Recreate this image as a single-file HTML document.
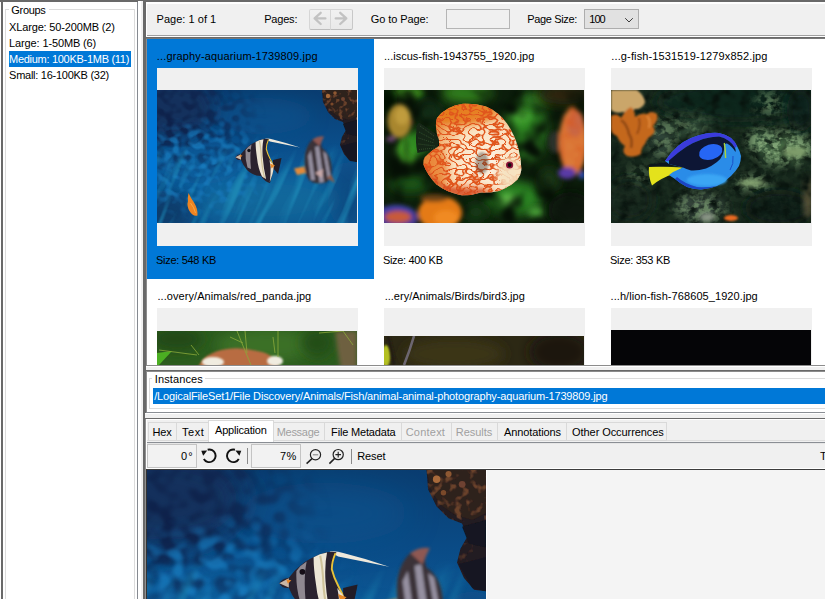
<!DOCTYPE html>
<html>
<head>
<meta charset="utf-8">
<title>File Discovery</title>
<style>
html,body{margin:0;padding:0;}
body{width:825px;height:599px;overflow:hidden;background:#f0f0f0;position:relative;
  font-family:"Liberation Sans","DejaVu Sans",sans-serif;font-size:11px;color:#000;}
.a{position:absolute;}
.t{position:absolute;white-space:nowrap;line-height:14px;height:14px;}
.w{color:#fff;}
.dis{color:#a0a0a0;}
.tab{top:422px;height:19px;box-sizing:border-box;border:1px solid #d9d9d9;background:#f0f0f0;}
.fld{top:444px;height:24px;box-sizing:border-box;border:1px solid #c4c4c4;background:#f2f2f2;}
</style>
</head>
<body>
<!-- DEFS -->
<svg width="0" height="0" style="position:absolute">
<defs>
  <filter id="b1" x="-30%" y="-30%" width="160%" height="160%"><feGaussianBlur stdDeviation="1"/></filter>
  <filter id="b2" x="-30%" y="-30%" width="160%" height="160%"><feGaussianBlur stdDeviation="2.2"/></filter>
  <filter id="b4" x="-40%" y="-40%" width="180%" height="180%"><feGaussianBlur stdDeviation="4.5"/></filter>
  <filter id="b8" x="-50%" y="-50%" width="200%" height="200%"><feGaussianBlur stdDeviation="9"/></filter>
  <filter id="b05" x="-20%" y="-20%" width="140%" height="140%"><feGaussianBlur stdDeviation="0.45"/></filter>
  <filter id="wlight" x="0" y="0" width="100%" height="100%" color-interpolation-filters="sRGB">
    <feTurbulence type="fractalNoise" baseFrequency="0.13 0.15" numOctaves="1" seed="4"/>
    <feColorMatrix type="matrix" values="0 0 0 0 0.09  0 0 0 0 0.47  0 0 0 0 0.73  4.6 0 0 0 -2.15"/><feGaussianBlur stdDeviation="0.7"/>
  </filter>
  <filter id="wdark" x="0" y="0" width="100%" height="100%" color-interpolation-filters="sRGB">
    <feTurbulence type="fractalNoise" baseFrequency="0.12 0.14" numOctaves="1" seed="11"/>
    <feColorMatrix type="matrix" values="0 0 0 0 0.055  0 0 0 0 0.13  0 0 0 0 0.29  0 4.6 0 0 -2.0"/><feGaussianBlur stdDeviation="0.7"/>
  </filter>
  <filter id="wstreak" x="0" y="0" width="100%" height="100%" color-interpolation-filters="sRGB">
    <feTurbulence type="fractalNoise" baseFrequency="0.11 0.012" numOctaves="2" seed="7"/>
    <feColorMatrix type="matrix" values="0 0 0 0 0.11  0 0 0 0 0.52  0 0 0 0 0.70  3.2 0 0 0 -1.6"/><feGaussianBlur stdDeviation="0.7"/>
  </filter>
  <filter id="ctex" x="0" y="0" width="100%" height="100%" color-interpolation-filters="sRGB">
    <feTurbulence type="fractalNoise" baseFrequency="0.22" numOctaves="2" seed="5"/>
    <feColorMatrix type="matrix" values="0 0 0 0 0.66  0 0 0 0 0.40  0 0 0 0 0.24  4.5 0 0 0 -2.35"/>
  </filter>
  <linearGradient id="aqbg" x1="0" y1="0" x2="0" y2="1">
    <stop offset="0" stop-color="#0a3d70"/><stop offset=".35" stop-color="#0a4b86"/>
    <stop offset=".7" stop-color="#0d5c9b"/><stop offset="1" stop-color="#0c5792"/>
  </linearGradient>
  <radialGradient id="mkA" gradientUnits="userSpaceOnUse" cx="45" cy="78" r="85" gradientTransform="translate(45 78) scale(1 .62) translate(-45 -78)">
    <stop offset="0" stop-color="#fff"/><stop offset=".6" stop-color="#bbb"/><stop offset="1" stop-color="#000"/>
  </radialGradient>
  <radialGradient id="mkB" gradientUnits="userSpaceOnUse" cx="15" cy="30" r="95" gradientTransform="translate(15 30) scale(1 .7) translate(-15 -30)">
    <stop offset="0" stop-color="#fff"/><stop offset=".55" stop-color="#999"/><stop offset="1" stop-color="#000"/>
  </radialGradient>
  <linearGradient id="mkC" x1="0" y1="0" x2="0" y2="1">
    <stop offset=".4" stop-color="#000"/><stop offset=".62" stop-color="#fff"/><stop offset="1" stop-color="#fff"/>
  </linearGradient>
  <mask id="mA" maskUnits="userSpaceOnUse" x="0" y="0" width="200" height="133"><rect width="200" height="133" fill="url(#mkA)"/></mask>
  <mask id="mB" maskUnits="userSpaceOnUse" x="0" y="0" width="200" height="133"><rect width="200" height="133" fill="url(#mkB)"/></mask>
  <mask id="mC" maskUnits="userSpaceOnUse" x="0" y="0" width="200" height="133"><rect width="200" height="133" fill="url(#mkC)"/></mask>
  <clipPath id="aqclip"><rect width="200" height="133"/></clipPath>
  <clipPath id="corclip"><path d="M165 0 L200 0 L200 72 L193 71 L187 64 L183 55 L185 47 L189 40 L186 32 L178 29 L171 22 L166 12 Z"/></clipPath>
  <g id="aq" clip-path="url(#aqclip)">
    <rect width="200" height="133" fill="url(#aqbg)"/>
    <ellipse cx="12" cy="18" rx="48" ry="30" fill="#132f58" opacity=".85" filter="url(#b8)"/>
    <ellipse cx="105" cy="26" rx="50" ry="18" fill="#0c5590" opacity=".55" filter="url(#b8)"/>
    <ellipse cx="6" cy="122" rx="32" ry="22" fill="#083660" opacity=".8" filter="url(#b8)"/>
    <ellipse cx="192" cy="105" rx="22" ry="34" fill="#0a447a" opacity=".7" filter="url(#b8)"/>
    <ellipse cx="110" cy="110" rx="70" ry="22" fill="#14749f" opacity=".5" filter="url(#b8)"/>
    <ellipse cx="45" cy="72" rx="40" ry="22" fill="#0f66a6" opacity=".4" filter="url(#b8)"/>
    <g mask="url(#mB)"><rect width="200" height="133" filter="url(#wdark)"/></g>
    <g mask="url(#mA)"><rect width="200" height="133" filter="url(#wlight)"/></g>
    <g mask="url(#mC)"><rect x="-60" y="-40" width="320" height="240" filter="url(#wstreak)" transform="rotate(24 100 66)"/></g>
    <!-- coral -->
    <g filter="url(#b05)">
      <path d="M165 0 L200 0 L200 72 L193 71 L187 64 L183 55 L185 47 L189 40 L186 32 L178 29 L171 22 L166 12 Z" fill="#221a20"/>
      <path d="M165 0 L200 0 L200 26 L192 30 L182 27 L173 21 L167 11 Z" fill="#2f201c"/>
      <g clip-path="url(#corclip)" opacity=".5"><rect x="160" y="0" width="40" height="31" filter="url(#ctex)"/><rect x="178" y="44" width="14" height="12" filter="url(#ctex)" opacity=".6"/></g>
      <circle cx="171" cy="6" r="2.200" fill="#a86a3a"/><circle cx="178" cy="3" r="1.800" fill="#8e5832"/>
      <circle cx="186" cy="9" r="2" fill="#6e4230"/><circle cx="175" cy="14" r="1.600" fill="#7a4a2c"/>
      <path d="M186 34 L200 30 L200 46 L190 44 Z" fill="#121520"/>
      <path d="M184 56 L200 52 L200 72 L192 70 Z" fill="#151722"/>
    </g>
    <!-- fish 2 -->
    <g filter="url(#b1)">
      <path d="M137 78.500 L147 76.500 L149 83 L140 85 Z" fill="#e08a3a"/>
      <path d="M148 64 Q150 54 156 49 L166 46.500 Q163 53 165 58 Q173 63 174.500 75 Q176 87 170 92 Q160 96 152 90 Q146 80 148 64 Z" fill="#3a3038"/>
      <path d="M151 66 L154 60 L158 90 L154 90 Z M158 57 L162 56 L167 92 L162.500 93 Z M166 61 L169.500 64 L173.500 86 L171 90 Z" fill="#9590a0"/>
      <path d="M155.500 49.500 Q161 45.500 167 46.500 L162.500 56 Z" fill="#8e5852"/>
      <path d="M158 83 L166 79 L165 88 Z" fill="#c8a8a8"/>
      <path d="M170 88 L178 93 L174 84 Z" fill="#8a5a48"/>
    </g>
    <!-- fish 1 -->
    <g filter="url(#b05)">
      <path d="M108 48.500 Q112 48 116 49.500 Q130 53 143 57.500 Q128 54.500 113 51.500 Z" fill="#efe9dc"/>
      <path d="M116 70 L124.500 68 Q123 76 121 84 L116 78 Z" fill="#211c28"/>
      <path d="M78.400 67.200 Q80 64.500 84 64 Q87.700 58.900 93 55 Q99 51 106 49 Q110 48.300 112 49 Q110 54 109.500 59 Q111 64 113.400 69 Q116 73 117 77 Q116 82 113 93 Q108 92 104 86 Q96 86 90 80 Q86 75 84 70 Q80 70.500 78.400 67.200 Z" fill="#2a222e"/>
      <path d="M98.600 52 Q102 50 106.500 49.200 Q105 56 105.600 66 Q106.500 78 109 89 L105 86.500 Q101 78 100 68 Q98.500 58 98.600 52 Z" fill="#ece6d6"/>
      <path d="M102.500 51 Q104 58 104.500 70 Q105.500 80 107.500 88" stroke="#cfc39a" stroke-width="1.200" fill="none"/>
      <path d="M88.500 60 Q91 56.500 94.500 54.500 Q92.500 64 94 79 L90.500 77.500 Q88 69 88.500 60 Z" fill="#8f8890"/>
      <path d="M111.500 49.500 Q109.300 54.500 109.300 59 Q110.500 64 113.200 69 Q115.500 73 116.500 77" stroke="#e6c23a" stroke-width="1.100" fill="none"/>
      <path d="M112.500 70 Q114 76 113.500 84 L112.800 92 L115.500 84 Q117 78 116.500 75 Z" fill="#e9e2d2"/>
      <circle cx="92" cy="60.500" r="1.700" fill="#121018"/>
      <path d="M78.400 67.200 L84 64.300 L84 69.800 Z" fill="#c9b6a6"/>
      <path d="M82.500 65 L85.500 65.500 L83.500 67.500 Z" fill="#e8862a"/>
      <path d="M113 73.500 L118 75.500 L114.500 78.500 Z" fill="#e88a2a"/>
    </g>
    <!-- small orange fish -->
    <g filter="url(#b05)">
      <path d="M31.500 103 Q30.500 108 31 111 Q29.500 116 32.500 121 Q36 127 40.500 125.500 Q41 119 37 112.500 Q34 108.500 31.500 103 Z" fill="#ee8420"/>
      <path d="M33.500 113 Q37 117 38.500 123" stroke="#f8b050" stroke-width=".8" fill="none"/>
    </g>
  </g>
</defs>
</svg>
<svg width="0" height="0" style="position:absolute">
<defs>
  <filter id="c3" x="-40%" y="-40%" width="180%" height="180%"><feGaussianBlur stdDeviation="3"/></filter>
  <filter id="c6" x="-50%" y="-50%" width="200%" height="200%"><feGaussianBlur stdDeviation="6"/></filter>
  <radialGradient id="dbody" gradientUnits="userSpaceOnUse" cx="104" cy="72" r="62">
    <stop offset="0" stop-color="#fdf3e4"/><stop offset=".55" stop-color="#fae2c2"/>
    <stop offset=".85" stop-color="#f2b070"/><stop offset="1" stop-color="#e6863c"/>
  </radialGradient>
  <filter id="dnet" x="0" y="0" width="100%" height="100%" color-interpolation-filters="sRGB">
    <feTurbulence type="turbulence" baseFrequency="0.15 0.2" numOctaves="1" seed="8"/>
    <feColorMatrix type="matrix" values="0 0 0 0 0.88  0 0 0 0 0.34  0 0 0 0 0.12  -8 0 0 0 1.38"/>
    <feGaussianBlur stdDeviation="0.3"/>
  </filter>
  <filter id="dnet2" x="0" y="0" width="100%" height="100%" color-interpolation-filters="sRGB">
    <feTurbulence type="turbulence" baseFrequency="0.1 0.13" numOctaves="1" seed="21"/>
    <feColorMatrix type="matrix" values="0 0 0 0 0.84  0 0 0 0 0.36  0 0 0 0 0.14  0 -9 0 0 1.4"/>
    <feGaussianBlur stdDeviation="1.1"/>
  </filter>
  <filter id="gtex" x="0" y="0" width="100%" height="100%" color-interpolation-filters="sRGB">
    <feTurbulence type="fractalNoise" baseFrequency="0.05 0.045" numOctaves="2" seed="2"/>
    <feColorMatrix type="matrix" values="0 0 0 0 0.02  0 0 0 0 0.06  0 0 0 0 0.02  0 3.2 0 0 -1.35"/>
    <feGaussianBlur stdDeviation="2"/>
  </filter>
  <clipPath id="dclip"><path d="M55 50 Q50 38 53 28 Q62 16 79 13.800 Q92 13 102 16.400 Q115 22 123 33.400 Q131 45 134.700 59.400 Q137.500 70 137.300 80.300 Q136.500 86 133.400 89.400 Q126 97 115 101 Q106 103 97 102.400 Q86 106 76 105 Q62 102 52.600 94.600 Q44 86 39.600 75 Q39 70 41 67 Q48 60 55 56 Z"/></clipPath>
  <clipPath id="dclipR"><ellipse cx="189" cy="52" rx="14" ry="36"/></clipPath>
  <clipPath id="pclip"><rect width="200" height="133"/></clipPath>
  <g id="discus" clip-path="url(#pclip)">
    <rect width="200" height="133" fill="#0d1f0c"/>
    <ellipse cx="24" cy="3" rx="16" ry="7" fill="#3a8a1c" filter="url(#c3)"/>
    <ellipse cx="82" cy="3" rx="26" ry="10" fill="#33821e" filter="url(#c6)"/>
    <ellipse cx="45" cy="22" rx="12" ry="12" fill="#143a1c" filter="url(#c6)"/>
    <ellipse cx="24" cy="60" rx="11" ry="15" fill="#46a628" filter="url(#c3)"/>
    <ellipse cx="34" cy="52" rx="10" ry="14" fill="#2f8a22" filter="url(#c6)"/>
    <ellipse cx="142" cy="40" rx="20" ry="30" fill="#2d8624" filter="url(#c6)"/>
    <ellipse cx="137" cy="26" rx="10" ry="7" fill="#48aa36" filter="url(#c3)"/>
    <ellipse cx="148" cy="58" rx="7" ry="10" fill="#41a032" filter="url(#c3)"/>
    <ellipse cx="150" cy="10" rx="14" ry="7" fill="#2f7a22" filter="url(#c6)"/>
    <ellipse cx="130" cy="108" rx="28" ry="17" fill="#2c8422" filter="url(#c6)"/>
    <ellipse cx="124" cy="110" rx="9" ry="7" fill="#5cb444" filter="url(#c3)"/>
    <ellipse cx="152" cy="122" rx="8" ry="5" fill="#4aa238" filter="url(#c3)"/>
    <ellipse cx="26" cy="94" rx="20" ry="9" fill="#1f5818" filter="url(#c6)"/>
    <ellipse cx="92" cy="122" rx="12" ry="9" fill="#153c12" filter="url(#c6)"/>
    <ellipse cx="180" cy="5" rx="26" ry="9" fill="#30260f" filter="url(#c6)"/>
    <ellipse cx="4" cy="12" rx="10" ry="14" fill="#050a05" filter="url(#c6)"/>
    <ellipse cx="186" cy="120" rx="22" ry="18" fill="#0a150a" filter="url(#c6)"/>
    <ellipse cx="165" cy="90" rx="10" ry="12" fill="#1a3a16" filter="url(#c6)"/>
    <rect width="200" height="133" filter="url(#gtex)"/>
    <!-- background fishes -->
    <g filter="url(#b2)">
      <ellipse cx="15.500" cy="31" rx="12" ry="17" fill="#a8862e"/>
      <ellipse cx="18" cy="26" rx="7" ry="9" fill="#c09c3c"/>
      <ellipse cx="7" cy="49" rx="5" ry="3" fill="#6a4470"/>
      <circle cx="27.500" cy="32" r="1.500" fill="#a03040"/>
    </g>
    <g filter="url(#b2)">
      <ellipse cx="171" cy="52" rx="7" ry="11" fill="#2a302a"/>
      <ellipse cx="189" cy="52" rx="14" ry="33" fill="#dc7c3a"/>
      <ellipse cx="191" cy="34" rx="8" ry="13" fill="#c86848"/>
      <g clip-path="url(#dclipR)"><rect x="170" y="15" width="30" height="80" filter="url(#dnet2)" opacity=".8"/></g>
      <ellipse cx="183" cy="83" rx="9" ry="6" fill="#5a3aa6"/>
      <ellipse cx="198" cy="85" rx="3" ry="4" fill="#2a50c4"/>
    </g>
    <g filter="url(#b2)">
      <ellipse cx="56" cy="123" rx="22" ry="17" fill="#e47a18"/>
      <ellipse cx="50" cy="108" rx="14" ry="4" fill="#6a4216"/>
      <ellipse cx="62" cy="128" rx="12" ry="8" fill="#f08a20"/>
      <ellipse cx="12" cy="128" rx="22" ry="13" fill="#4a3a94"/>
      <ellipse cx="14" cy="127" rx="13" ry="6" fill="#c85a3a"/>
      <path d="M0 120 Q14 112 30 122" stroke="#3a48c0" stroke-width="2" fill="none"/>
    </g>
    <!-- main fish -->
    <g filter="url(#b05)">
      <path d="M56 47 L36 33 Q32 33 32.500 40 Q31 52 33.500 63 L53 59 Z" fill="#172718"/>
      <path d="M36 36 L50 46 M35 42 L50 50 M34.500 48 L50 53 M34.500 54 L51 56 M35 59.500 L52 58" stroke="#3c5a34" stroke-width=".7" fill="none" stroke-dasharray="1 1"/>
      <path d="M55 50 Q50 38 53 28 Q62 16 79 13.800 Q92 13 102 16.400 Q115 22 123 33.400 Q131 45 134.700 59.400 Q137.500 70 137.300 80.300 Q136.500 86 133.400 89.400 Q126 97 115 101 Q106 103 97 102.400 Q86 106 76 105 Q62 102 52.600 94.600 Q44 86 39.600 75 Q39 70 41 67 Q48 60 55 56 Z" fill="url(#dbody)"/>
      <g clip-path="url(#dclip)">
        <ellipse cx="76" cy="22" rx="36" ry="13" fill="#e67c1a" opacity=".9" filter="url(#c3)"/>
        <ellipse cx="50" cy="80" rx="13" ry="24" fill="#e88030" opacity=".75" filter="url(#c3)"/>
        <ellipse cx="80" cy="103" rx="30" ry="7" fill="#de5a28" opacity=".7" filter="url(#c3)"/>
        <rect x="30" y="5" width="115" height="110" filter="url(#dnet)"/>
        <ellipse cx="126" cy="84" rx="13" ry="18" fill="#f6e2c0" opacity=".9" filter="url(#c3)"/>
        <ellipse cx="98" cy="73" rx="6.500" ry="11" fill="#4a4038" opacity=".45" filter="url(#b1)"/>
        <path d="M40 80 Q54 100 76 105 Q88 106 100 102 L100 99 Q80 102 62 96 Q48 88 42 76 Z" fill="#cf4a26" opacity=".55" filter="url(#b1)"/>
      </g>
      <circle cx="125.600" cy="75" r="3.600" fill="#8a1238"/><circle cx="125.600" cy="75" r="1.900" fill="#120810"/>
    </g>
  </g>

  <filter id="moss" x="0" y="0" width="100%" height="100%" color-interpolation-filters="sRGB">
    <feTurbulence type="fractalNoise" baseFrequency="0.13 0.16" numOctaves="3" seed="14"/>
    <feColorMatrix type="matrix" values="0 0 0 0 0.50  0 0 0 0 0.64  0 0 0 0 0.46  4.4 0 0 0 -1.8"/>
    <feGaussianBlur stdDeviation="0.5"/>
  </filter>
  <filter id="mossd" x="0" y="0" width="100%" height="100%" color-interpolation-filters="sRGB">
    <feTurbulence type="fractalNoise" baseFrequency="0.1 0.12" numOctaves="2" seed="33"/>
    <feColorMatrix type="matrix" values="0 0 0 0 0.03  0 0 0 0 0.07  0 0 0 0 0.05  0 3.6 0 0 -1.7"/>
    <feGaussianBlur stdDeviation="0.8"/>
  </filter>
  <mask id="mMoss" maskUnits="userSpaceOnUse" x="0" y="0" width="200" height="133">
    <rect width="200" height="133" fill="#0d0d0d"/>
    <g filter="url(#c6)" fill="#fff">
      <ellipse cx="140" cy="8" rx="70" ry="14" fill="#000"/>
      <ellipse cx="172" cy="58" rx="30" ry="16"/>
      <ellipse cx="150" cy="50" rx="14" ry="10"/>
      <ellipse cx="142" cy="93" rx="18" ry="6"/>
      <ellipse cx="90" cy="118" rx="26" ry="14" fill="#aaa"/>
      <ellipse cx="52" cy="48" rx="12" ry="20" fill="#999"/>
      <ellipse cx="158" cy="16" rx="8" ry="10" fill="#bbb"/>
      <ellipse cx="75" cy="36" rx="22" ry="7" fill="#888"/>
      <ellipse cx="30" cy="84" rx="14" ry="8" fill="#777"/>
    </g>
  </mask>
  <g id="tang" clip-path="url(#pclip)">
    <rect width="200" height="133" fill="#15261b"/>
    <ellipse cx="125" cy="12" rx="80" ry="20" fill="#10261f" filter="url(#c6)"/>
    <ellipse cx="174" cy="60" rx="24" ry="12" fill="#4e7048" filter="url(#c6)"/>
    <ellipse cx="150" cy="52" rx="12" ry="9" fill="#3a5c40" filter="url(#c6)"/>
    <ellipse cx="80" cy="38" rx="24" ry="8" fill="#34503a" filter="url(#c6)"/>
    <ellipse cx="50" cy="50" rx="10" ry="18" fill="#33463a" filter="url(#c6)"/>
    <ellipse cx="90" cy="116" rx="24" ry="14" fill="#34443a" filter="url(#c6)"/>
    <ellipse cx="168" cy="118" rx="34" ry="18" fill="#0e1c14" filter="url(#c6)"/>
    <ellipse cx="190" cy="20" rx="14" ry="22" fill="#10201a" filter="url(#c6)"/>
    <ellipse cx="18" cy="110" rx="24" ry="22" fill="#15261a" filter="url(#c6)"/>
    <ellipse cx="197" cy="108" rx="4" ry="22" fill="#5e563a" filter="url(#c3)"/>
    <rect width="200" height="133" filter="url(#mossd)"/>
    <g mask="url(#mMoss)"><rect width="200" height="133" filter="url(#moss)"/></g>
    <ellipse cx="141" cy="93" rx="13" ry="3.500" fill="#86a472" filter="url(#b2)"/>
    <ellipse cx="184" cy="62" rx="12" ry="5" fill="#7e9c6a" filter="url(#b2)"/>
    <ellipse cx="96" cy="127" rx="8" ry="4" fill="#8e9a8a" filter="url(#b2)"/>
    <!-- corals -->
    <g filter="url(#b1)">
      <path d="M0 0 L26 0 Q34 6 34 13 Q30 20 24 19 Q20 24 12 22 Q4 24 0 20 Z" fill="#caa66a"/>
      <path d="M0 26 Q6 22 10 28 Q14 20 20 17 Q24 20 24 27 Q30 22 36 24 Q40 20 46 24 Q48 30 42 36 Q46 42 40 46 Q36 48 34 54 Q30 58 30 64 Q24 68 16 66 Q10 62 14 56 Q8 52 6 46 Q0 44 0 38 Z" fill="#c4681f"/>
      <path d="M10 30 Q16 34 18 44 Q22 50 20 58" stroke="#8e4614" stroke-width="2.500" fill="none"/>
      <path d="M28 28 Q30 36 26 44" stroke="#944a16" stroke-width="2" fill="none"/>
      <path d="M36 26 Q40 30 38 38" stroke="#e08838" stroke-width="2" fill="none"/>
    </g>
    <ellipse cx="120" cy="128" rx="7" ry="3" fill="#e86a22" filter="url(#b1)"/>
    <!-- fish -->
    <g filter="url(#b05)">
      <path d="M38 76 L72 77.500 Q66 81 62 84 Q50 88 41 95.500 Q37 86 38 76 Z" fill="#e4e21c"/>
      <path d="M38 74.500 L58 72 L62 76 L38 77 Z" fill="#10141a"/>
      <path d="M54 71 Q60 62 67 56 Q73 51 80 48 Q88 44.500 95 43.500 Q102 42.500 108 43 Q115 44.500 120 48 Q124 51.500 126 56 Q129 61 130 66 Q130 71 128 76 Q125 81 120 86 Q114 92 106 96 Q98 99 90 99.500 Q82 99 76 97 Q69 93.500 64 89 Q60 86.500 58 85 L62 82 L72 77.500 L58 74 Z" fill="#2b8ce8"/>
      <ellipse cx="96" cy="90" rx="20" ry="6" fill="#3ba6f4" filter="url(#b1)"/>
      <path d="M64 89 Q69 93.500 76 97 Q82 99 90 99.500 Q98 99 106 96 Q96 98 86 97 Q74 94 66 87 Z" fill="#1c44c4"/>
      <path d="M54 71 Q60 62 67 56 Q73 51 80 48 Q88 44.500 95 43.500 Q102 42.500 108 43 Q115 44.500 120 48 Q124 51.500 126 56 L124 58 Q121 53 118 51 Q113 47 108 46.500 Q100 46.500 92 49 Q83 52 75 57 Q66 63 58 71 Z" fill="#3a3adc"/>
      <path d="M58 70.500 Q66 63 75 57 Q83 52 92 49 Q100 46.500 108 46.500 Q113 47 118 51 Q121 53 124 58 Q125 60 124.500 62 Q121 56 116 53.500 Q114 53 113.500 55 Q113.500 59 112 64 Q110 69 106 72 Q101 76 95 78.500 Q87 81 80 80.500 Q75 79 72 77.500 L58 74 Z" fill="#0e1534"/>
      <ellipse cx="99.700" cy="62" rx="12" ry="7.600" transform="rotate(-17 99.700 62)" fill="#2766f4"/>
      <path d="M113.300 53 Q114.600 60 114.600 68" stroke="#a8d23c" stroke-width="1.400" fill="none"/>
      <path d="M122 66 Q123 74 119 80" stroke="#1a50c8" stroke-width="1" fill="none"/>
    </g>
  </g>

  <g id="panda">
    <rect width="200" height="133" fill="#2c5c1e"/>
    <ellipse cx="110" cy="14" rx="50" ry="16" fill="#3a7028" filter="url(#c6)"/>
    <ellipse cx="20" cy="8" rx="26" ry="12" fill="#214a16" filter="url(#c6)"/>
    <ellipse cx="160" cy="12" rx="16" ry="14" fill="#244e18" filter="url(#c6)"/>
    <path d="M178 0 L200 0 L200 40 L184 40 Q180 20 178 0 Z" fill="#6e6040" filter="url(#b2)"/>
    <path d="M40 40 Q44 22 70 18 Q84 16 100 20 Q118 22 124 40 Z" fill="#b86c42" filter="url(#b1)"/>
    <ellipse cx="56" cy="31" rx="11" ry="5" fill="#f0ece0" filter="url(#b1)"/>
    <ellipse cx="118" cy="30" rx="8" ry="5" fill="#f0ece0" filter="url(#b1)"/>
    <path d="M0 22 L15 20 L2 34 L0 34 Z" fill="#4cae22" filter="url(#b05)"/>
    <g stroke="#8aa83a" stroke-width=".8" fill="none" filter="url(#b05)">
      <path d="M80 0 Q88 20 94 34"/><path d="M88 0 L90 22"/><path d="M121 0 L121 26"/><path d="M116 6 L118 22"/>
      <path d="M2 19 L40 24"/><path d="M73 6 L86 12"/><path d="M162 2 L186 0 L196 14"/><path d="M34 14 L42 24"/>
    </g>
  </g>

  <g id="bird3">
    <rect width="200" height="133" fill="#2c2814"/>
    <ellipse cx="70" cy="18" rx="50" ry="16" fill="#3a3418" filter="url(#c6)"/>
    <ellipse cx="175" cy="16" rx="30" ry="20" fill="#1c1810" filter="url(#c6)"/>
    <ellipse cx="2" cy="20" rx="4.500" ry="11" fill="#b4c024" filter="url(#b1)"/>
    <path d="M30 0 Q26 14 20 29" stroke="#6c6670" stroke-width="2.600" fill="none" filter="url(#b05)"/>
    <path d="M4 0 Q8 14 10 29" stroke="#201c14" stroke-width="3" fill="none" filter="url(#b1)"/>
  </g>
</defs>
</svg>
<!-- /DEFS -->

<!-- ===== window edges ===== -->
<div class="a" style="left:0;top:0;width:825px;height:2px;background:#696969;"></div>
<div class="a" style="left:0;top:2px;width:825px;height:2px;background:#fff;"></div>
<div class="a" style="left:0;top:2px;width:1px;height:597px;background:#fff;"></div>
<div class="a" style="left:1px;top:0;width:2px;height:599px;background:#696969;"></div>

<!-- ===== left groups panel ===== -->
<div class="a" style="left:3px;top:2px;width:134px;height:597px;background:#fff;"></div>
<div class="a" style="left:137px;top:2px;width:1px;height:597px;background:#868a91;"></div>
<div class="a" style="left:138px;top:1px;width:5px;height:598px;background:linear-gradient(90deg,#fff 0,#fff 50%,#f0f0f0 60%,#f0f0f0 100%);"></div>
<div class="a" style="left:5px;top:9px;width:130px;height:600px;border:1px solid #dcdcdc;box-sizing:border-box;"></div>
<div class="a" style="left:9px;top:4px;width:40px;height:12px;background:#fff;"></div>
<div class="t" style="left:11.3px;top:3px;letter-spacing:-0.3px;">Groups</div>
<div class="t" style="left:9.1px;top:20px;letter-spacing:-0.163px;">XLarge: 50-200MB (2)</div>
<div class="t" style="left:9.1px;top:36px;letter-spacing:-0.131px;">Large: 1-50MB (6)</div>
<div class="a" style="left:9px;top:51px;width:122px;height:16px;background:#0078d7;"></div>
<div class="t w" style="left:9px;top:52px;letter-spacing:-0.286px;">Medium: 100KB-1MB (11)</div>
<div class="t" style="left:9.1px;top:68px;letter-spacing:-0.268px;">Small: 16-100KB (32)</div>

<!-- ===== vertical splitter ===== -->
<div class="a" style="left:143px;top:0;width:3px;height:599px;background:#696969;"></div>
<div class="a" style="left:146px;top:37px;width:1px;height:375px;background:#8c8c8c;"></div>
<div class="a" style="left:145px;top:419px;width:1px;height:180px;background:#909090;"></div>

<!-- ===== top toolbar ===== -->
<div class="a" style="left:147px;top:4px;width:678px;height:31px;background:#f0f0f0;"></div>
<div class="a" style="left:146px;top:2px;width:1px;height:35px;background:#fff;"></div>
<div class="t" style="left:156.6px;top:12px;letter-spacing:0.021px;">Page: 1 of 1</div>
<div class="t" style="left:264.2px;top:12px;letter-spacing:-0.2px;">Pages:</div>
<div class="a" style="left:309px;top:9px;width:22px;height:21px;box-sizing:border-box;border:1px solid #d6d6d6;border-bottom-color:#bdbdbd;border-radius:2px 0 0 2px;background:linear-gradient(#f1f1f1,#e9e9e9);"></div>
<div class="a" style="left:330px;top:9px;width:23px;height:21px;box-sizing:border-box;border:1px solid #d6d6d6;border-bottom-color:#bdbdbd;border-right-color:#c8c8c8;border-radius:0 2px 2px 0;background:linear-gradient(#f1f1f1,#e9e9e9);"></div>
<svg class="a" style="left:309px;top:8px;" width="44" height="22" viewBox="0 0 44 22">
  <g fill="none" stroke="#c2c2c2" stroke-width="2.3" stroke-linecap="round" stroke-linejoin="round">
    <path d="M5.600 10.400 H16.400 M11.700 4.800 L5.600 10.400 L11.700 16"/>
    <path d="M26.700 10.400 H37.300 M31.200 4.800 L37.300 10.400 L31.200 16"/>
  </g>
</svg>
<div class="t" style="left:370.8px;top:12px;letter-spacing:-0.1px;">Go to Page:</div>
<div class="a" style="left:446px;top:9px;width:64px;height:20px;box-sizing:border-box;border:1px solid #b5b5b5;background:#f0f0f0;"></div>
<div class="t" style="left:527.3px;top:12px;letter-spacing:-0.36px;">Page Size:</div>
<div class="a" style="left:584px;top:9px;width:55px;height:20px;box-sizing:border-box;border:1px solid #adadad;background:#e1e1e1;"></div>
<div class="t" style="left:589.3px;top:12px;letter-spacing:-1.0px;">100</div>
<svg class="a" style="left:622px;top:14px;" width="14" height="12" viewBox="622 14 14 12"><path d="M625.200 18.200 L629 22 L632.800 18.200" fill="none" stroke="#3c3c3c" stroke-width="1"/></svg>

<!-- toolbar / thumbs divider -->
<div class="a" style="left:147px;top:35px;width:678px;height:1px;background:#a0a0a0;"></div>
<div class="a" style="left:146px;top:36px;width:679px;height:1px;background:#fff;"></div>
<div class="a" style="left:146px;top:37px;width:679px;height:1px;background:#696969;"></div>
<div class="a" style="left:146px;top:38px;width:679px;height:1px;background:#787878;"></div>

<!-- ===== thumbnails area ===== -->
<div id="thumbs" class="a" style="left:147px;top:39px;width:678px;height:326px;background:#fff;overflow:hidden;">
  <!-- cell 1 (selected) -->
  <div class="a" style="left:0px;top:0px;width:227px;height:240px;background:#0078d7;"></div>
  <div class="t" style="left:9.8px;top:10px;letter-spacing:0.144px;">...graphy-aquarium-1739809.jpg</div>
  <div class="a" style="left:10px;top:29px;width:201px;height:178px;background:#f0f0f0;"></div>
  <div class="t" style="left:9px;top:214px;letter-spacing:-0.3px;">Size: 548 KB</div>
  <!-- cell 2 -->
  <div class="t" style="left:237.0px;top:10px;letter-spacing:0.016px;">...iscus-fish-1943755_1920.jpg</div>
  <div class="a" style="left:237px;top:29px;width:201px;height:178px;background:#f0f0f0;"></div>
  <div class="t" style="left:236px;top:214px;letter-spacing:-0.33px;">Size: 400 KB</div>
  <!-- cell 3 -->
  <div class="t" style="left:464.3px;top:10px;letter-spacing:0.131px;">...g-fish-1531519-1279x852.jpg</div>
  <div class="a" style="left:464px;top:29px;width:201px;height:178px;background:#f0f0f0;"></div>
  <div class="t" style="left:463px;top:214px;letter-spacing:-0.3px;">Size: 353 KB</div>
  <!-- row 2 -->
  <div class="t" style="left:10.4px;top:250px;letter-spacing:0.076px;">...overy/Animals/red_panda.jpg</div>
  <div class="a" style="left:10px;top:269px;width:201px;height:178px;background:#f0f0f0;"></div>
  <div class="t" style="left:237.7px;top:250px;letter-spacing:0.003px;">...ery/Animals/Birds/bird3.jpg</div>
  <div class="a" style="left:237px;top:269px;width:201px;height:178px;background:#f0f0f0;"></div>
  <div class="t" style="left:463.5px;top:250px;letter-spacing:0.079px;">...h/lion-fish-768605_1920.jpg</div>
  <div class="a" style="left:464px;top:269px;width:201px;height:178px;background:#f0f0f0;"></div>
  <!-- PHOTOS -->
  <svg class="a" style="left:10px;top:51px;" width="200" height="133" viewBox="0 0 200 133"><use href="#aq"/></svg>
  <svg class="a" style="left:237px;top:51px;" width="200" height="133" viewBox="0 0 200 133"><use href="#discus"/></svg>
  <svg class="a" style="left:464px;top:51px;" width="200" height="133" viewBox="0 0 200 133"><use href="#tang"/></svg>
  <svg class="a" style="left:10px;top:292px;" width="200" height="133" viewBox="0 0 200 133"><use href="#panda"/></svg>
  <svg class="a" style="left:237px;top:297px;" width="200" height="124" viewBox="0 0 200 124"><use href="#bird3"/></svg>
  <div class="a" style="left:464px;top:291px;width:200px;height:135px;background:#050507;"></div>
  <!-- /PHOTOS -->
</div>

<!-- ===== splitter between thumbs and instances ===== -->
<div class="a" style="left:147px;top:365px;width:678px;height:1px;background:#8c8c8c;"></div>
<div class="a" style="left:146px;top:366px;width:679px;height:1px;background:#fff;"></div>
<div class="a" style="left:146px;top:367px;width:679px;height:3px;background:#f0f0f0;"></div>
<div class="a" style="left:146px;top:370px;width:679px;height:1px;background:#696969;"></div>
<div class="a" style="left:146px;top:371px;width:679px;height:1px;background:#8c8c8c;"></div>

<!-- ===== instances panel ===== -->
<div class="a" style="left:147px;top:372px;width:678px;height:40px;background:#fff;"></div>
<div class="a" style="left:149px;top:378px;width:690px;height:31px;border:1px solid #dcdcdc;box-sizing:border-box;"></div>
<div class="a" style="left:152px;top:373px;width:53px;height:12px;background:#fff;"></div>
<div class="t" style="left:154.8px;top:372px;letter-spacing:0.118px;">Instances</div>
<div class="a" style="left:153px;top:388px;width:672px;height:16px;background:#0078d7;"></div>
<div class="t w" style="left:154.2px;top:389px;letter-spacing:-0.146px;">/LogicalFileSet1/File Discovery/Animals/Fish/animal-animal-photography-aquarium-1739809.jpg</div>

<!-- ===== splitter between instances and content viewer ===== -->
<div class="a" style="left:146px;top:412px;width:679px;height:1px;background:#8a8e94;"></div>
<div class="a" style="left:145px;top:413px;width:680px;height:1px;background:#fff;"></div>
<div class="a" style="left:145px;top:414px;width:680px;height:4px;background:#f0f0f0;"></div>
<div class="a" style="left:145px;top:418px;width:680px;height:1px;background:#696969;"></div>
<div class="a" style="left:146px;top:419px;width:679px;height:1px;background:#fff;"></div>
<div class="a" style="left:146px;top:420px;width:1px;height:49px;background:#fff;"></div>

<!-- ===== tabs ===== -->
<div id="tabs">
<div class="a" style="left:147px;top:440px;width:678px;height:1px;background:#dedede;"></div>
<div class="a" style="left:147px;top:442px;width:678px;height:1px;background:#8a8e94;"></div>
<div class="a" style="left:147px;top:443px;width:678px;height:1px;background:#e6e6e6;"></div>
<div class="a tab" style="left:148px;width:29px;"></div><div class="t" style="left:152.4px;top:425px;letter-spacing:-0.1px;">Hex</div>
<div class="a tab" style="left:176px;width:33px;"></div><div class="t" style="left:182px;top:425px;letter-spacing:0.55px;">Text</div>
<div class="a tab" style="left:273px;width:52px;"></div><div class="t dis" style="left:276.7px;top:425px;letter-spacing:-0.283px;">Message</div>
<div class="a tab" style="left:324px;width:78px;"></div><div class="t" style="left:331.1px;top:425px;letter-spacing:-0.175px;">File Metadata</div>
<div class="a tab" style="left:401px;width:51px;"></div><div class="t dis" style="left:405.7px;top:425px;letter-spacing:0.217px;">Context</div>
<div class="a tab" style="left:451px;width:47px;"></div><div class="t dis" style="left:455.7px;top:425px;letter-spacing:0.0px;">Results</div>
<div class="a tab" style="left:497px;width:70px;"></div><div class="t" style="left:504px;top:425px;letter-spacing:-0.1px;">Annotations</div>
<div class="a tab" style="left:566px;width:101px;"></div><div class="t" style="left:572.1px;top:425px;letter-spacing:-0.076px;">Other Occurrences</div>
<div class="a" style="left:208px;top:420px;width:66px;height:22px;box-sizing:border-box;border:1px solid #d9d9d9;border-bottom:none;background:#fff;"></div>
<div class="t" style="left:215px;top:423px;letter-spacing:-0.2px;">Application</div>
</div>

<!-- ===== viewer toolbar ===== -->
<div id="vtb">
<div class="a fld" style="left:147px;width:50px;"></div><div class="t" style="left:181px;top:449px;letter-spacing:1.2px;">0&deg;</div>
<svg class="a" style="left:199px;top:445px;" width="46" height="22" viewBox="199 445 46 22">
  <g fill="none" stroke="#111" stroke-width="1.9">
    <path d="M203.840 458.950 A6.300 6.300 0 1 0 207.670 449.710"/>
    <path d="M238.760 458.950 A6.300 6.300 0 1 1 234.930 449.710"/>
  </g>
  <path d="M201.300 450.800 L207.200 450.600 L203.200 455.800 Z" fill="#111"/>
  <path d="M241.300 450.800 L235.400 450.600 L239.400 455.800 Z" fill="#111"/>
</svg>
<div class="a" style="left:247px;top:448px;width:1px;height:16px;background:#8a8a8a;"></div>
<div class="a fld" style="left:251px;width:50px;"></div><div class="t" style="left:280px;top:449px;letter-spacing:0.3px;">7%</div>
<svg class="a" style="left:304px;top:445px;" width="46" height="22" viewBox="304 445 46 22">
  <g fill="none" stroke="#222" stroke-width="1.2">
    <circle cx="315.500" cy="454.800" r="5.100"/>
    <path d="M312 458.600 L306.600 463.600" stroke-width="1.500"/>
    <circle cx="338.200" cy="454.600" r="5.100"/>
    <path d="M334.700 458.400 L329.400 463.600" stroke-width="1.500"/>
    <path d="M335.400 454.600 H341 M338.200 451.800 V457.400" stroke-width="1.100"/>
  </g>
  <path d="M312.800 454.800 H318.200" stroke="#8a8a8a" stroke-width="1.100" fill="none"/>
</svg>
<div class="a" style="left:351px;top:449px;width:1px;height:15px;background:#8a8a8a;"></div>
<div class="t" style="left:357.2px;top:449px;letter-spacing:-0.1px;">Reset</div>
<div class="t" style="left:820px;top:449px;">T</div>
</div>

<!-- ===== image viewer ===== -->
<div class="a" style="left:146px;top:468px;width:679px;height:1px;background:#fff;"></div>
<div class="a" style="left:146px;top:469px;width:679px;height:1px;background:#3c3c3c;"></div>
<div class="a" style="left:146px;top:470px;width:679px;height:129px;background:#f4f4f4;"></div>
<div class="a" style="left:486px;top:470px;width:1px;height:129px;background:#fff;"></div>
<div class="a" style="left:146px;top:469px;width:1px;height:130px;background:#333;"></div>
<div id="viewer" class="a" style="left:147px;top:470px;width:339px;height:129px;background:#0d4f86;overflow:hidden;"><svg class="a" style="left:-1px;top:-1px;" width="340" height="226" viewBox="0 0 200 133"><use href="#aq"/></svg></div>

</body>
</html>
